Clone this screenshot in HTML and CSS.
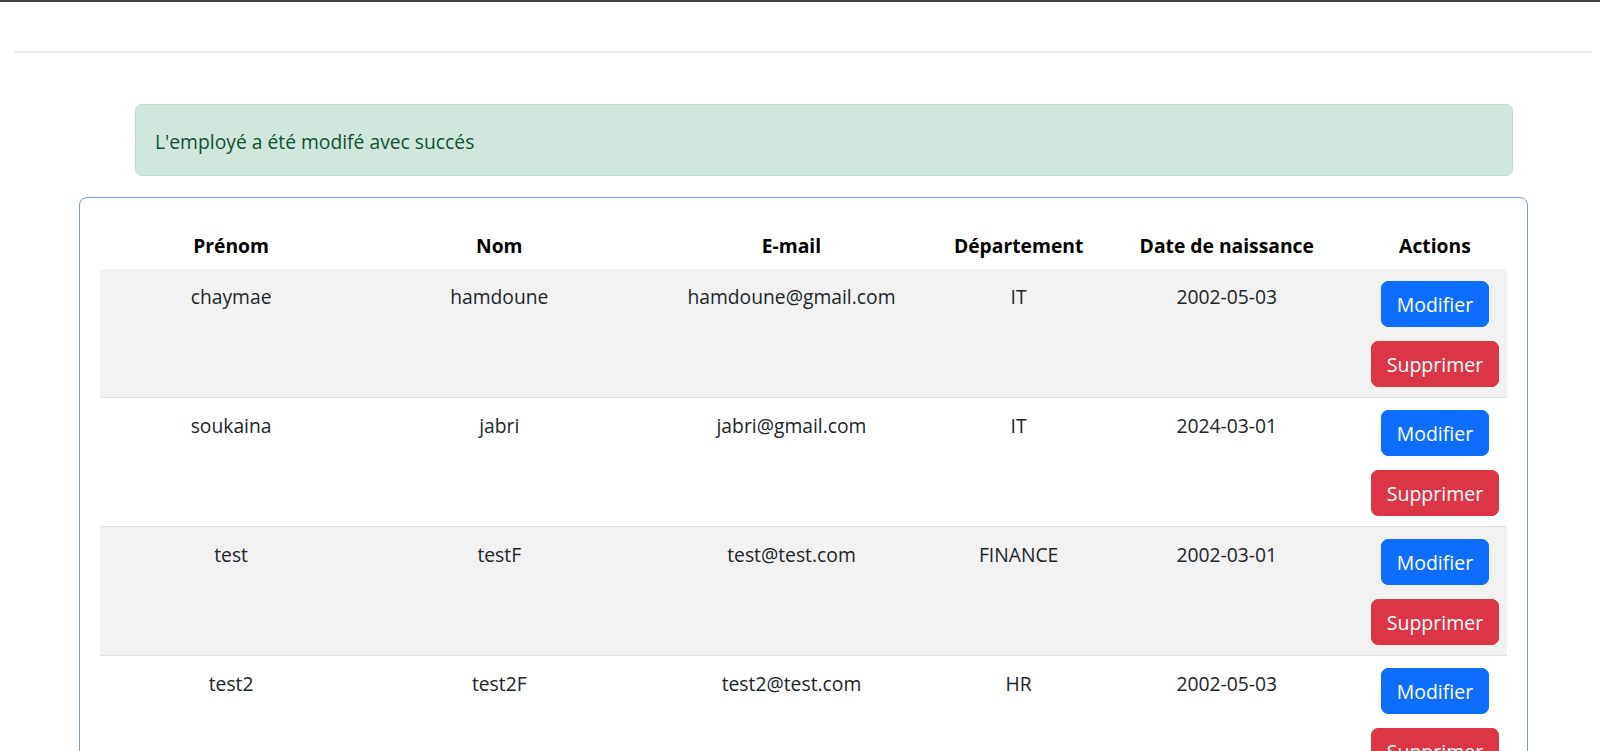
FILE: index.html
```html
<!DOCTYPE html>
<html lang="fr">
<head>
<meta charset="utf-8">
<title>Employés</title>
<link rel="stylesheet" href="styles.css">
</head>
<body>
<div class="topline"></div>
<hr class="sep">
<main class="main">
  <div class="alert">L'employé a été modifé avec succés</div>
  <div class="card">
    <table class="table">
      <thead>
        <tr>
          <th class="c1">Prénom</th>
          <th class="c2">Nom</th>
          <th class="c3">E-mail</th>
          <th class="c4">Département</th>
          <th class="c5">Date de naissance</th>
          <th class="c6">Actions</th>
        </tr>
      </thead>
      <tbody>
        <tr>
          <td>chaymae</td><td>hamdoune</td><td>hamdoune@gmail.com</td><td>IT</td><td>2002-05-03</td>
          <td class="actions"><button class="btn btn-primary">Modifier</button><button class="btn btn-danger">Supprimer</button></td>
        </tr>
        <tr>
          <td>soukaina</td><td>jabri</td><td>jabri@gmail.com</td><td>IT</td><td>2024-03-01</td>
          <td class="actions"><button class="btn btn-primary">Modifier</button><button class="btn btn-danger">Supprimer</button></td>
        </tr>
        <tr>
          <td>test</td><td>testF</td><td>test@test.com</td><td>FINANCE</td><td>2002-03-01</td>
          <td class="actions"><button class="btn btn-primary">Modifier</button><button class="btn btn-danger">Supprimer</button></td>
        </tr>
        <tr>
          <td>test2</td><td>test2F</td><td>test2@test.com</td><td>HR</td><td>2002-05-03</td>
          <td class="actions"><button class="btn btn-primary">Modifier</button><button class="btn btn-danger">Supprimer</button></td>
        </tr>
      </tbody>
    </table>
  </div>
</main>
</body>
</html>
```

FILE: styles.css
```css
* { box-sizing: border-box; }
html, body { margin: 0; padding: 0; background: #fff; }
body {
  font-family: "Open Sans", "Noto Sans", "Liberation Sans", sans-serif;
  font-size: 19.3px;
  line-height: 30px;
  color: #212529;
  overflow: hidden;
}
.topline { height: 2px; background: #444; }
.sep {
  margin: 49px 8px 0 15px;
  border: 0;
  border-top: 2px solid #e6e6e6;
  height: 0;
}
.main { padding-top: 51px; }
.alert {
  margin: 0 87px 0 135px;
  height: 72px;
  padding: 22px 19px 18px;
  background: #d1e7dd;
  border: 1px solid #badbcc;
  border-radius: 7px;
  color: #0f5132;
}
.card {
  margin: 21px 72px 0 79px;
  padding: 21px 20px 20px;
  border: 1px solid #6f9fe0;
  border-radius: 8px;
}
.table {
  width: 100%;
  table-layout: fixed;
  border-collapse: collapse;
}
.table th {
  font-weight: 700;
  color: #000;
  padding: 12px 0 8px;
  text-align: center;
  height: 50px;
}
.c1 { width: 262px; }
.c2 { width: 274px; }
.c3 { width: 310px; }
.c4 { width: 144px; }
.c5 { width: 272px; }
.c6 { width: 144px; }
.table td {
  padding: 13px 0 10px;
  text-align: center;
  vertical-align: top;
  border-bottom: 1px solid #dee2e6;
}
.table td.actions { padding-top: 10px; }
.table tbody tr:nth-child(odd) td { background: #f2f2f2; }
.btn {
  display: block;
  margin: 2px auto 0;
  height: 46px;
  padding: 0 15px;
  border: 1px solid transparent;
  border-radius: 7px;
  font-family: inherit;
  font-size: 19.5px;
  color: #fff;
  cursor: pointer;
}
.btn + .btn { margin-top: 14px; }
.btn-primary { background: #0d6efd; border-color: #0d6efd; }
.btn-danger { background: #dc3545; border-color: #dc3545; }
```
